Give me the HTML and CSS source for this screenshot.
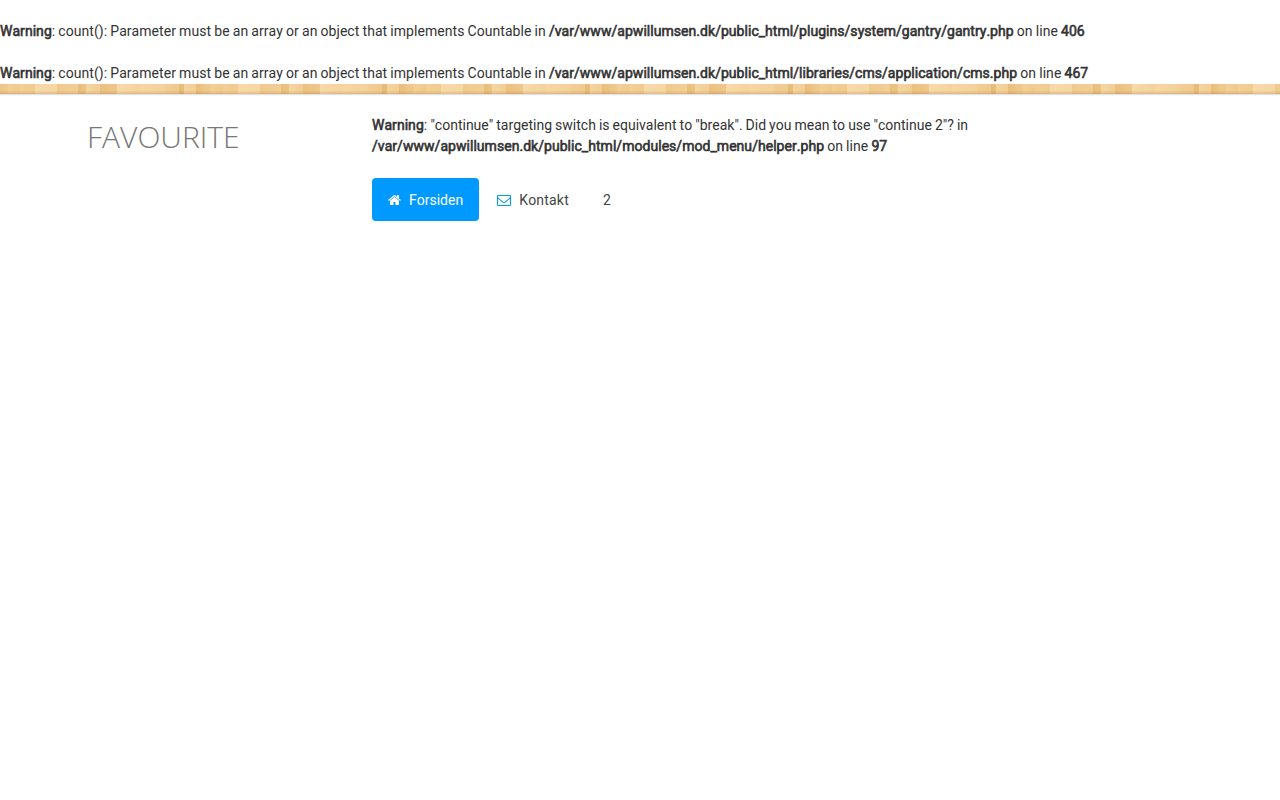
FILE: index.html
```html
<!DOCTYPE html>
<html lang="da">
<head>
    <meta charset="UTF-8">
    <meta name="viewport" content="width=device-width, initial-scale=1.0">
    <title>Forsiden</title>
    <link rel="stylesheet" href="styles.css">
</head>
<body>
    <br>
    <b>Warning</b>: count(): Parameter must be an array or an object that implements Countable in <b>/var/www/apwillumsen.dk/public_html/plugins/system/gantry/gantry.php</b> on line <b>406</b><br>
    <br>
    <b>Warning</b>: count(): Parameter must be an array or an object that implements Countable in <b>/var/www/apwillumsen.dk/public_html/libraries/cms/application/cms.php</b> on line <b>467</b><br>

    <div class="top-bar"></div>

    <header class="container">
        <a href="#" class="logo">FAVOURITE</a>

        <div class="menu-block">
            <b>Warning</b>: <span class="message">"continue" targeting switch is equivalent to "break". Did you mean to use "continue 2"? in</span> <b>/var/www/apwillumsen.dk/public_html/modules/mod_menu/helper.php</b> on line <b>97</b><br>

            <nav class="menu">
                <a href="#" class="item active">
                    <svg class="icon" width="13" height="14" viewBox="0 0 1664 1792"><path fill="currentColor" d="M1408 992v480q0 26-19 45t-45 19H960v-384H704v384H320q-26 0-45-19t-19-45V992q0-1 .5-3t.5-3l575-474 575 474q1 2 1 6zm223-69l-62 74q-8 9-21 11h-3q-13 0-21-7L832 424l-692 577q-12 8-24 7-13-2-21-11l-62-74q-8-10-7-23.500t11-21.500l719-599q32-26 76-26t76 26l244 204V288q0-14 9-23t23-9h192q14 0 23 9t9 23v408l219 182q10 8 11 21.500t-7 23.500z"/></svg>
                    <span>Forsiden</span>
                </a>
                <a href="#" class="item contact">
                    <svg class="icon" width="14" height="14" viewBox="0 0 1792 1792"><path fill="currentColor" d="M1664 1504V736q-32 36-69 66-268 206-426 338-51 43-83 67t-86.500 48.500T897 1280h-2q-48 0-102.500-24.500T706 1207t-83-67Q465 1008 197 802q-37-30-69-66v768q0 13 9.500 22.500t22.500 9.500h1472q13 0 22.500-9.500t9.500-22.500zm0-1051v-24.500l-.5-13-3-12.500-5.500-9-9-7.500-14-2.500H160q-13 0-22.500 9.500T128 416q0 168 147 284 193 152 401 317 6 5 35 29.500t46 37.500 44.500 31.500T852 1143t43 9h2q20 0 43-9t50.500-27.500T1035 1084t46-37.500 35-29.500q208-165 401-317 54-43 100.500-115.500T1664 453zm128-37v1088q0 66-47 113t-113 47H160q-66 0-113-47T0 1504V416q0-66 47-113t113-47h1472q66 0 113 47t47 113z"/></svg>
                    <span>Kontakt</span>
                </a>
                <a href="#" class="item"><span>2</span></a>
            </nav>
        </div>
    </header>
</body>
</html>
```
FILE: styles.css
```css
body {
    margin: 0;
    background: #fff;
    color: #333;
    font-family: Roboto, sans-serif;
    font-size: 14px;
    line-height: 21px;
    font-kerning: none;
    letter-spacing: 0.05px;
    word-spacing: -0.4px;
}
a {
    color: #444;
    text-decoration: none;
}
b {
    font-weight: 400;
    letter-spacing: 0.04px;
    -webkit-text-stroke: 0.6px #333;
}
/* wooden strip */
.top-bar {
    height: 10px;
    box-shadow: 0 1px 1px rgba(0, 0, 0, 0.12);
    background:
        linear-gradient(rgba(255, 255, 255, 0) 65%, rgba(120, 80, 20, 0.2)),
        repeating-linear-gradient(90deg,
            #edc687 0, #f0ca8e 8px, #f3d097 8px, #f0c98d 20px,
            #f3cf95 20px, #f1cb8f 35px, #f8d9a8 35px, #f6d6a2 57px,
            #f0c98d 57px, #f3cf95 78px, #e9be7b 78px, #edc483 86px,
            #f6d5a1 86px, #f2ce95 100px, #ecc180 100px, #efc78a 117px,
            #f8d9a8 117px, #f6d39d 140px, #f7d6a3 140px, #f4d19a 165px,
            #f2cd94 165px, #f0c98d 179px, #e6ba77 179px, #e9be7c 184px,
            #f5d39c 184px, #f3cf95 196px, #e9bd7a 196px, #edc384 203px);
}
.container {
    display: flex;
    width: 1200px;
    margin: 0 auto;
    padding-top: 21px;
}
.logo {
    width: 284px;
    padding-left: 47px;
    box-sizing: border-box;
    color: #777;
    font-family: "Open Sans", sans-serif;
    font-size: 30px;
    font-weight: 300;
    font-kerning: normal;
    letter-spacing: 0;
    line-height: 43px;
}
.menu-block {
    width: 640px;
    padding-left: 48px;
}
.message {
    letter-spacing: 0;
    word-spacing: -0.45px;
}
.menu {
    display: flex;
    margin-top: 21px;
    letter-spacing: 0;
}
.item {
    display: flex;
    align-items: center;
    height: 43px;
    padding: 0 16px;
    margin-right: 2px;
    border-radius: 4px;
}
.item span {
    padding-top: 2px;
}
.item.active {
    background: #0099ff;
    color: #fff;
}
.contact {
    letter-spacing: 0.2px;
}
.icon {
    margin-right: 8px;
    color: #0099ff;
}
.active .icon {
    color: #fff;
}
```
